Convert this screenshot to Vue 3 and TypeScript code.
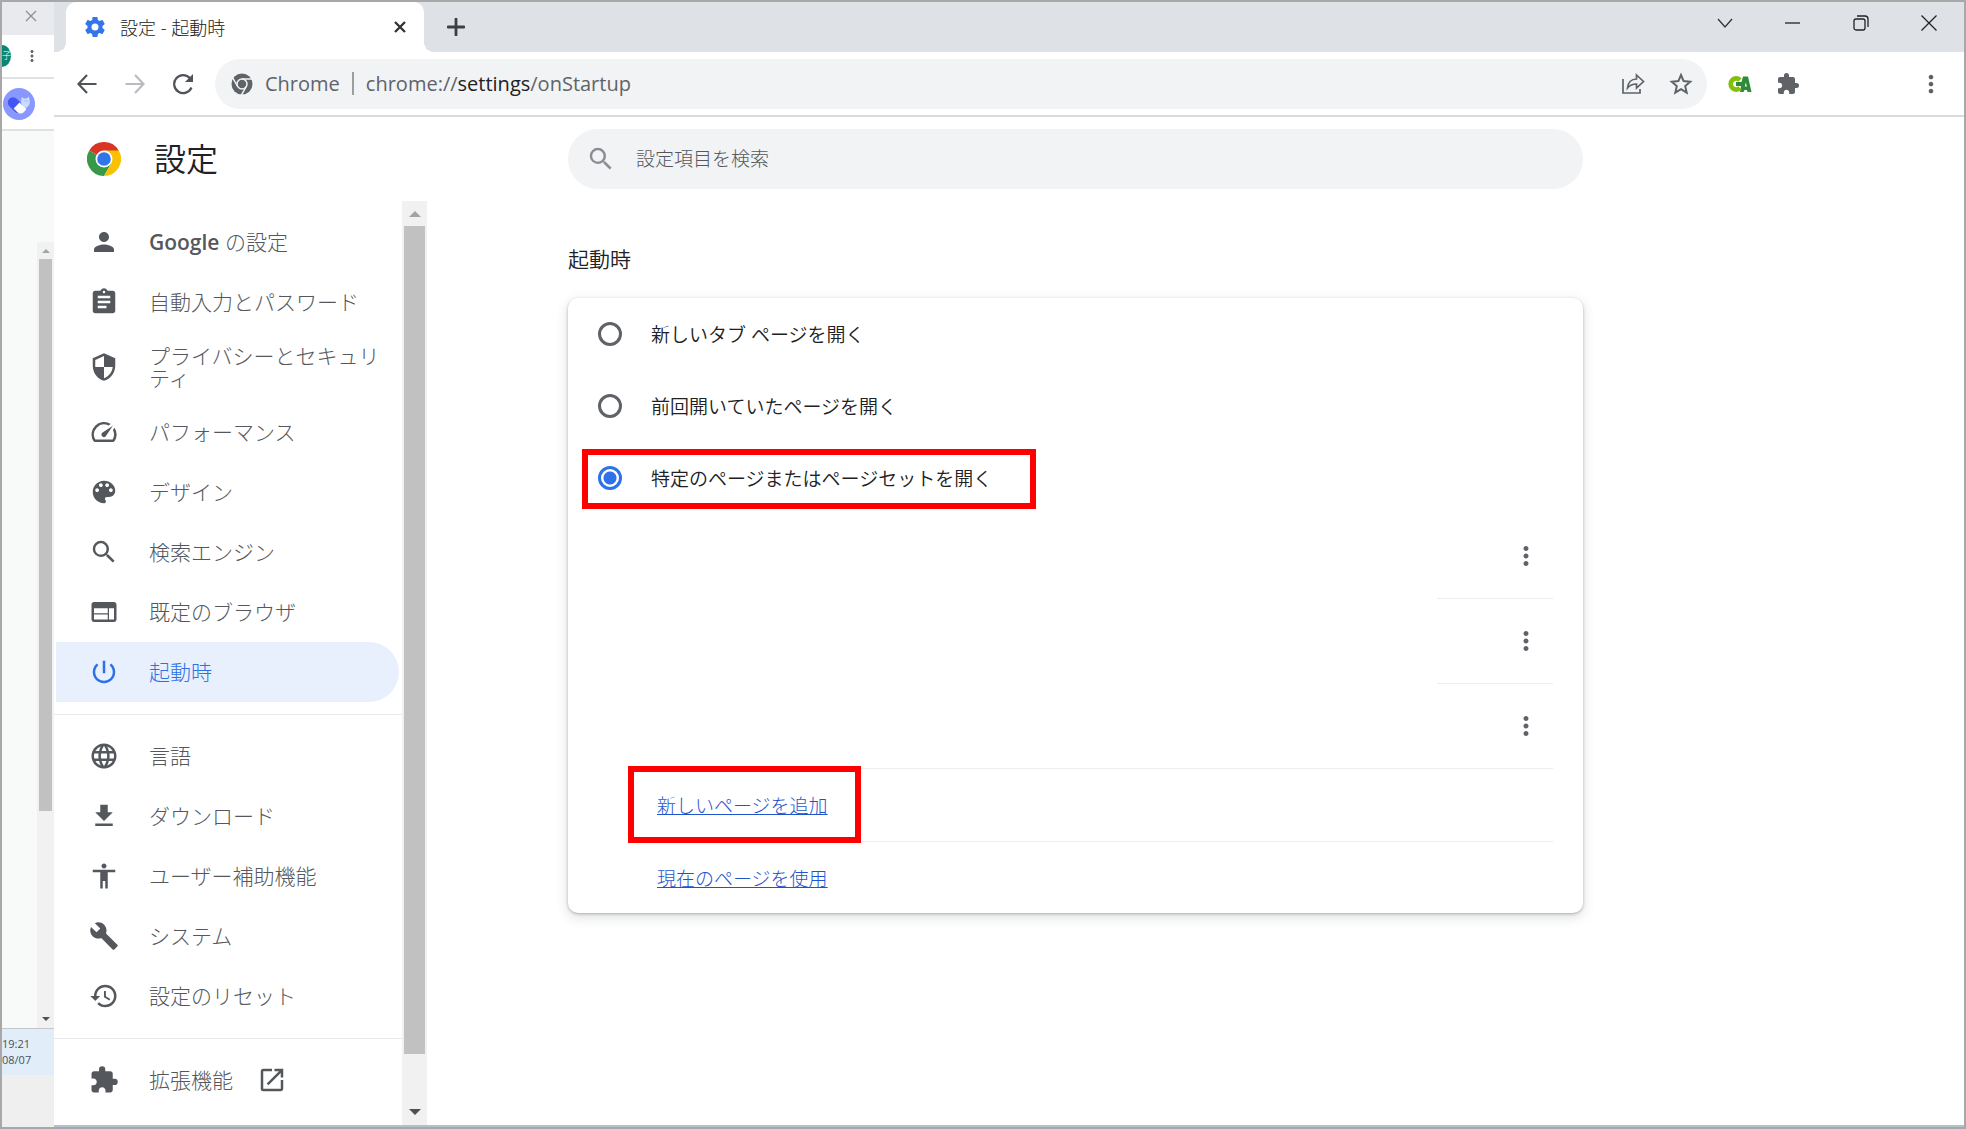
<script setup lang="ts">
import { ref } from 'vue'

interface NavItem {
  id: string
  label: string
  icon: string
  external?: boolean
}

const puzzle =
  'M20.5 11H19V7c0-1.100-.9-2-2-2h-4V3.500a2.500 2.500 0 0 0-5 0V5H4c-1.100 0-1.990.9-1.990 2v3.800H3.500c1.490 0 2.700 1.210 2.700 2.700s-1.210 2.700-2.700 2.700H2V20c0 1.100.9 2 2 2h3.800v-1.500c0-1.490 1.210-2.700 2.700-2.700s2.700 1.210 2.700 2.700V22H17c1.100 0 2-.9 2-2v-4h1.500a2.500 2.500 0 0 0 0-5z'
const search =
  'M15.500 14h-.79l-.28-.27A6.471 6.471 0 0 0 16 9.500 6.500 6.500 0 1 0 9.500 16c1.610 0 3.090-.59 4.230-1.570l.27.28v.79l5 4.990L20.490 19l-4.990-5zm-6 0C7.010 14 5 11.990 5 9.500S7.010 5 9.500 5 14 7.010 14 9.500 11.990 14 9.500 14z'
const dots =
  'M12 8c1.100 0 2-.9 2-2s-.9-2-2-2-2 .9-2 2 .9 2 2 2zm0 2c-1.100 0-2 .9-2 2s.9 2 2 2 2-.9 2-2-.9-2-2-2zm0 6c-1.100 0-2 .9-2 2s.9 2 2 2 2-.9 2-2-.9-2-2-2z'

const groups: NavItem[][] = [
  [
    { id: 'people', label: 'Google の設定', icon: 'M12 12c2.210 0 4-1.790 4-4s-1.790-4-4-4-4 1.790-4 4 1.790 4 4 4zm0 2c-2.670 0-8 1.340-8 4v2h16v-2c0-2.660-5.330-4-8-4z' },
    { id: 'autofill', label: '自動入力とパスワード', icon: 'M19 3h-4.180C14.400 1.840 13.300 1 12 1c-1.300 0-2.400.84-2.820 2H5c-1.100 0-2 .9-2 2v14c0 1.100.9 2 2 2h14c1.100 0 2-.9 2-2V5c0-1.100-.9-2-2-2zm-7 0c.55 0 1 .45 1 1s-.45 1-1 1-1-.45-1-1 .45-1 1-1zm2 14H7v-2h7v2zm3-4H7v-2h10v2zm0-4H7V7h10v2z' },
    { id: 'privacy', label: 'プライバシーとセキュリティ', icon: 'M12 1L3 5v6c0 5.550 3.840 10.740 9 12 5.160-1.260 9-6.450 9-12V5l-9-4zm0 10.990h7c-.53 4.120-3.280 7.790-7 8.940V12H5V6.300l7-3.110v8.800z' },
    { id: 'performance', label: 'パフォーマンス', icon: 'M20.380 8.570l-1.230 1.850a8 8 0 0 1-.22 7.580H5.070A8 8 0 0 1 15.580 6.850l1.850-1.230A10 10 0 0 0 3.350 19a2 2 0 0 0 1.720 1h13.850a2 2 0 0 0 1.740-1 10 10 0 0 0-.27-10.440zm-9.790 6.840a2 2 0 0 0 2.830 0l5.660-8.490-8.490 5.660a2 2 0 0 0 0 2.830z' },
    { id: 'appearance', label: 'デザイン', icon: 'M12 3c-4.970 0-9 4.030-9 9s4.030 9 9 9c.83 0 1.500-.67 1.500-1.500 0-.39-.15-.74-.39-1.010-.23-.26-.38-.61-.38-.99 0-.83.67-1.500 1.500-1.500H16c2.760 0 5-2.240 5-5 0-4.420-4.030-8-9-8zm-5.500 9c-.83 0-1.500-.67-1.500-1.500S5.670 9 6.500 9 8 9.670 8 10.500 7.330 12 6.500 12zm3-4C8.670 8 8 7.330 8 6.500S8.670 5 9.500 5s1.500.67 1.500 1.500S10.330 8 9.500 8zm5 0c-.83 0-1.500-.67-1.500-1.500S13.670 5 14.500 5s1.500.67 1.500 1.500S15.330 8 14.500 8zm3 4c-.83 0-1.500-.67-1.500-1.500S16.670 9 17.500 9s1.500.67 1.500 1.500-.67 1.500-1.500 1.500z' },
    { id: 'engines', label: '検索エンジン', icon: search },
    { id: 'browser', label: '既定のブラウザ', icon: 'M20 4H4c-1.100 0-1.990.9-1.990 2L2 18c0 1.100.9 2 2 2h16c1.100 0 2-.9 2-2V6c0-1.100-.9-2-2-2zm-5 14H4v-4h11v4zm0-5H4V9h11v4zm5 5h-4V9h4v9z' },
    { id: 'startup', label: '起動時', icon: 'M13 3h-2v10h2V3zm4.830 2.170l-1.420 1.420C17.990 7.860 19 9.810 19 12c0 3.870-3.130 7-7 7s-7-3.130-7-7c0-2.190 1.010-4.140 2.580-5.420L6.170 5.170C4.230 6.820 3 9.260 3 12c0 4.970 4.030 9 9 9s9-4.030 9-9c0-2.740-1.230-5.180-3.170-6.830z' },
  ],
  [
    { id: 'languages', label: '言語', icon: 'M11.990 2C6.470 2 2 6.480 2 12s4.470 10 9.990 10C17.520 22 22 17.520 22 12S17.520 2 11.990 2zm6.930 6h-2.950a15.650 15.650 0 0 0-1.380-3.560A8.030 8.030 0 0 1 18.920 8zM12 4.040c.83 1.200 1.480 2.530 1.910 3.960h-3.820c.43-1.430 1.080-2.760 1.910-3.960zM4.260 14C4.100 13.360 4 12.690 4 12s.1-1.360.26-2h3.380c-.08.66-.14 1.320-.14 2s.06 1.340.14 2H4.260zm.82 2h2.950c.32 1.250.78 2.450 1.380 3.560A7.987 7.987 0 0 1 5.080 16zm2.950-8H5.080a7.987 7.987 0 0 1 4.330-3.560A15.650 15.650 0 0 0 8.030 8zM12 19.960c-.83-1.200-1.480-2.530-1.910-3.960h3.820c-.43 1.430-1.080 2.760-1.910 3.960zM14.340 14H9.660c-.09-.66-.16-1.320-.16-2s.07-1.350.16-2h4.680c.09.65.16 1.320.16 2s-.07 1.340-.16 2zm.25 5.560c.6-1.110 1.060-2.310 1.380-3.560h2.950a8.030 8.030 0 0 1-4.330 3.560zM16.360 14c.08-.66.14-1.320.14-2s-.06-1.340-.14-2h3.380c.16.64.26 1.310.26 2s-.1 1.360-.26 2h-3.380z' },
    { id: 'downloads', label: 'ダウンロード', icon: 'M19 9h-4V3H9v6H5l7 7 7-7zM5 18v2h14v-2H5z' },
    { id: 'a11y', label: 'ユーザー補助機能', icon: 'M12 2c1.100 0 2 .9 2 2s-.9 2-2 2-2-.9-2-2 .9-2 2-2zm9 7h-6v13h-2v-6h-2v6H9V9H3V7h18v2z' },
    { id: 'system', label: 'システム', icon: 'M22.700 19l-9.100-9.100c.9-2.300.4-5-1.500-6.900-2-2-5-2.400-7.400-1.300L9 6 6 9 1.600 4.700C.4 7.100.9 10.100 2.900 12.100c1.900 1.900 4.600 2.400 6.900 1.500l9.100 9.100c.4.4 1 .4 1.400 0l2.300-2.300c.5-.4.5-1.100.1-1.400z' },
    { id: 'reset', label: '設定のリセット', icon: 'M13 3a9 9 0 0 0-9 9H1l3.890 3.890.07.14L9 12H6c0-3.870 3.130-7 7-7s7 3.130 7 7-3.130 7-7 7c-1.930 0-3.680-.79-4.940-2.060l-1.420 1.420A8.954 8.954 0 0 0 13 21a9 9 0 0 0 0-18zm-1 5v5l4.280 2.540.72-1.210-3.500-2.080V8H12z' },
  ],
  [{ id: 'addons', label: '拡張機能', icon: puzzle, external: true }],
]

const options = [
  { value: 'newtab', label: '新しいタブ ページを開く' },
  { value: 'continue', label: '前回開いていたページを開く' },
  { value: 'specific', label: '特定のページまたはページセットを開く' },
]

const active = ref('startup')
const startup = ref('specific')
const query = ref('')
</script>

<template>
  <div class="desktop">
    <aside class="behind">
      <div class="behind-title">
        <svg width="12" height="12" viewBox="0 0 12 12"><path d="M1 1l10 10M11 1L1 11" stroke="#8b8d90" stroke-width="1.200" /></svg>
      </div>
      <div class="behind-tools">
        <span class="avatar">子</span>
        <svg width="18" height="18" viewBox="0 0 24 24"><path :d="dots" fill="#5f6368" /></svg>
      </div>
      <div class="behind-app">
        <svg width="32" height="32" viewBox="0 0 32 32">
          <circle cx="16" cy="16" r="16" fill="#8898ff" />
          <g transform="rotate(45 10 14.500)"><rect x="4.800" y="9.300" width="18" height="10.400" rx="5.200" fill="#4355f5" /></g>
          <path d="M18 15l.5-6 2.500 1.500h2.500l2.500-2 .8 5c.4 2-.5 3.500-2 5l-4 4z" fill="#c9dcff" />
          <path d="M16.500 14.500l6.800 6.800-2.300 2.700a5 5 0 0 1-6.800 0l-3.500-3.500z" fill="#fff" />
          <path d="M22 12.500v1M24 12.500v1" stroke="#7f9be8" stroke-width="1" />
        </svg>
      </div>
      <div class="behind-page">
        <div class="track small">
          <span class="arrow up"></span>
          <span class="thumb"></span>
          <span class="arrow down"></span>
        </div>
      </div>
      <div class="clock"><span>19:21</span><span>08/07</span></div>
      <div class="behind-rest"></div>
    </aside>

    <div class="window">
      <header class="tabstrip">
        <div class="tab">
          <svg width="24" height="24" viewBox="0 0 24 24">
            <path fill="#3474ea" fill-rule="evenodd" d="M19.430 12.980c.04-.32.07-.64.07-.98s-.03-.66-.07-.98l2.110-1.650c.19-.15.24-.42.12-.64l-2-3.460c-.12-.22-.39-.3-.61-.22l-2.490 1a7.030 7.030 0 0 0-1.690-.98l-.38-2.650A.488.488 0 0 0 14 2h-4c-.25 0-.46.18-.49.42l-.38 2.650c-.61.25-1.170.59-1.690.98l-2.490-1c-.23-.09-.49 0-.61.22l-2 3.460c-.13.22-.07.49.12.64l2.110 1.650c-.04.32-.07.65-.07.98s.03.66.07.98l-2.110 1.650c-.19.15-.24.42-.12.64l2 3.460c.12.22.39.3.61.22l2.490-1c.52.4 1.080.73 1.690.98l.38 2.650c.03.24.24.42.49.42h4c.25 0 .46-.18.49-.42l.38-2.650c.61-.25 1.170-.59 1.690-.98l2.490 1c.23.09.49 0 .61-.22l2-3.460c.12-.22.07-.49-.12-.64l-2.110-1.650zM12 15.500a3.500 3.500 0 1 1 0-7 3.500 3.500 0 0 1 0 7z" />
          </svg>
          <span class="tab-title">設定 - 起動時</span>
          <button class="bare" aria-label="タブを閉じる">
            <svg width="14" height="14" viewBox="0 0 14 14"><path d="M2 2l10 10M12 2L2 12" stroke="#303236" stroke-width="2.300" /></svg>
          </button>
        </div>
        <button class="bare new-tab" aria-label="新しいタブ">
          <svg width="18" height="18" viewBox="0 0 18 18"><path d="M9 1v16M1 9h16" stroke="#3c4043" stroke-width="2.800" stroke-linecap="round" /></svg>
        </button>
        <div class="controls">
          <button class="bare" aria-label="タブを検索">
            <svg width="16" height="16" viewBox="0 0 16 16"><path d="M1 4l7 8 7-8" fill="none" stroke="#333" stroke-width="1.300" /></svg>
          </button>
          <button class="bare" aria-label="最小化">
            <svg width="16" height="16" viewBox="0 0 16 16"><path d="M0 8h15" stroke="#222" stroke-width="1.300" /></svg>
          </button>
          <button class="bare" aria-label="元に戻す">
            <svg width="16" height="16" viewBox="0 0 16 16" fill="none" stroke="#222" stroke-width="1.300"><rect x="1" y="4" width="11" height="11" rx="2" /><path d="M4 1h8a3 3 0 0 1 3 3v8" /></svg>
          </button>
          <button class="bare" aria-label="閉じる">
            <svg width="16" height="16" viewBox="0 0 16 16"><path d="M.5.5l15 15M15.500.5l-15 15" stroke="#222" stroke-width="1.300" /></svg>
          </button>
        </div>
      </header>

      <div class="toolbar">
        <button class="bare tool" aria-label="戻る">
          <svg width="20" height="20" viewBox="0 0 20 20"><path d="M19.500 10H2M10 1L1.500 10l8.500 9" fill="none" stroke="#50545a" stroke-width="2.200" /></svg>
        </button>
        <button class="bare tool" aria-label="進む">
          <svg width="20" height="20" viewBox="0 0 20 20"><path d="M.5 10H18M10 1l8.500 9-8.500 9" fill="none" stroke="#b9bbbe" stroke-width="2.200" /></svg>
        </button>
        <button class="bare tool" aria-label="再読み込み">
          <svg width="22" height="22" viewBox="0 0 22 22"><path d="M19.500 14.500A9 9 0 1 1 18 5.200" fill="none" stroke="#50545a" stroke-width="2.200" /><path d="M21 1v8h-8z" fill="#50545a" /></svg>
        </button>
        <div class="omnibox">
          <svg width="22" height="22" viewBox="0 0 22 22">
            <circle cx="11" cy="11" r="10.500" fill="#5f6368" />
            <g fill="none" stroke="#f1f3f4" stroke-width="1.500"><circle cx="11" cy="11" r="5" /><path d="M11 6h10M6.700 13.500l-5-8.700M15.300 13.500l-5 8.700" /></g>
          </svg>
          <span class="site-name">Chrome</span>
          <span class="sep"></span>
          <span class="url">chrome://<b>settings</b>/onStartup</span>
          <button class="bare" aria-label="共有">
            <svg width="24" height="24" viewBox="0 0 24 24" fill="none" stroke="#5f6368" stroke-width="1.700"><path d="M2 7v14h17v-4" /><path d="M15.500 3l7 6.500-7 6.500v-4c-4 0-6.500 1-9 4 .5-5 3.500-9 9-9z" /></svg>
          </button>
          <button class="bare" aria-label="ブックマーク">
            <svg width="24" height="24" viewBox="0 0 24 24"><path d="M12 3l2.600 6.100 6.600.6-5 4.400 1.500 6.500-5.700-3.400-5.700 3.400 1.500-6.500-5-4.400 6.600-.6z" fill="none" stroke="#5f6368" stroke-width="2" /></svg>
          </button>
        </div>
        <div class="extensions">
          <button class="bare" aria-label="CA 拡張機能">
            <svg width="24" height="18" viewBox="0 0 24 18"><path d="M8 7h5.500L15 1.500h5L23.500 17h-4l-.5-2h-2.500l-1 2H12l1-6H8z" fill="#2f8a3a" /><path d="M16.800 11.500l1-4 1 4z" fill="#fff" /><path d="M12 5A5.500 5.500 0 1 0 12 13" fill="none" stroke="#85bf0c" stroke-width="4.800" /></svg>
          </button>
          <button class="bare" aria-label="拡張機能">
            <svg width="24" height="24" viewBox="0 0 24 24"><path :d="puzzle" fill="#5f6368" /></svg>
          </button>
        </div>
        <button class="bare menu" aria-label="メニュー">
          <svg width="28" height="28" viewBox="0 0 24 24"><path :d="dots" fill="#5f6368" /></svg>
        </button>
      </div>

      <div class="page">
        <div class="side">
          <div class="brand">
            <svg width="34" height="34" viewBox="0 0 48 48">
              <path d="M24 24L3.200 12A24 24 0 0 1 44.800 12z" fill="#d93526" />
              <path d="M24 24L3.200 12A24 24 0 0 0 24 48l10.400-18z" fill="#37984a" />
              <path d="M24 12h20.800A24 24 0 0 1 24 48l10.400-18z" fill="#f9c100" />
              <circle cx="24" cy="24" r="12" fill="#fff" />
              <circle cx="24" cy="24" r="9.600" fill="#3275e8" />
            </svg>
            <h1>設定</h1>
          </div>
          <div class="nav-area">
            <nav>
              <ul v-for="(group, i) in groups" :key="i">
                <li v-for="item in group" :key="item.id">
                  <a :href="'#' + item.id" :class="['item', { tall: item.id === 'privacy', active: item.id === active }]" @click="active = item.id">
                    <svg width="30" height="30" viewBox="0 0 24 24"><path :d="item.icon" fill="currentColor" fill-rule="evenodd" /></svg>
                    <span v-if="item.id === 'people'"><em>Google</em> の設定</span>
                    <span v-else>{{ item.label }}</span>
                    <svg v-if="item.external" class="external" width="30" height="30" viewBox="0 0 24 24"><path d="M19 19H5V5h7V3H5a2 2 0 0 0-2 2v14a2 2 0 0 0 2 2h14c1.100 0 2-.9 2-2v-7h-2v7zM14 3v2h3.590l-9.830 9.830 1.410 1.410L19 6.410V10h2V3h-7z" fill="currentColor" /></svg>
                  </a>
                </li>
              </ul>
            </nav>
            <div class="track">
              <span class="arrow up"></span>
              <span class="thumb"></span>
              <span class="arrow down"></span>
            </div>
          </div>
        </div>

        <main>
          <label class="search">
            <svg width="30" height="30" viewBox="0 0 24 24"><path :d="search" fill="#8a8d91" /></svg>
            <input v-model="query" type="search" placeholder="設定項目を検索" aria-label="設定項目を検索" />
          </label>
          <h2>起動時</h2>
          <section class="card">
            <label v-for="o in options" :key="o.value" :class="['option', { marked: o.value === 'specific' }]">
              <input v-model="startup" type="radio" name="startup" :value="o.value" />
              <span>{{ o.label }}</span>
            </label>
            <div v-for="n in 3" :key="n" :class="['entry', { last: n === 3 }]">
              <button class="bare" aria-label="その他の操作">
                <svg width="30" height="30" viewBox="0 0 24 24"><path :d="dots" fill="#5f6368" /></svg>
              </button>
            </div>
            <div class="link-row marked"><a href="#add">新しいページを追加</a></div>
            <div class="link-row"><a href="#current">現在のページを使用</a></div>
          </section>
        </main>
      </div>
    </div>
  </div>
</template>

<style>
body {
  margin: 0;
}
</style>

<style scoped>
*,
*::before,
*::after {
  box-sizing: border-box;
}
svg {
  display: block;
  flex: none;
}
.desktop {
  display: flex;
  min-height: 100vh;
  border: 2px solid #a8a8a8;
  background: #fff;
  color: #202124;
  font-family: 'Open Sans', 'Noto Sans CJK JP', sans-serif;
  font-weight: 300;
}
.bare {
  display: flex;
  align-items: center;
  justify-content: center;
  padding: 0;
  border: 0;
  background: none;
}

/* window behind, on the left */
.behind {
  display: flex;
  flex-direction: column;
  flex: none;
  width: 52px;
  overflow: hidden;
}
.behind-title {
  display: flex;
  align-items: center;
  height: 33px;
  padding: 0 0 6px 23px;
  background: #e8eaed;
}
.behind-tools {
  display: flex;
  align-items: center;
  gap: 12px;
  height: 44px;
  border-bottom: 2px solid #dfe1e3;
}
.avatar {
  flex: none;
  width: 9px;
  height: 22px;
  border-radius: 0 9px 9px 0 / 0 11px 11px 0;
  background: #0b8675;
  color: #fff;
  font-size: 9px;
  line-height: 22px;
}
.behind-app {
  display: flex;
  align-items: center;
  height: 52px;
  padding-left: 1px;
  border-bottom: 2px solid #dfe1e3;
}
.behind-page {
  display: flex;
  flex: 1;
  justify-content: flex-end;
  padding-top: 111px;
  background: #f8faf9;
}
.clock {
  display: flex;
  flex-direction: column;
  height: 47px;
  padding-top: 7px;
  border-top: 1px solid #c4c8cc;
  background: #e1edf9;
  color: #4c5056;
  font-size: 11px;
  font-weight: 400;
  line-height: 16px;
}
.behind-rest {
  height: 52px;
  background: #efefef;
}

/* scrollbars */
.track {
  display: flex;
  flex-direction: column;
  flex: none;
  align-items: center;
  width: 25px;
  background: #f1f1f1;
}
.thumb {
  flex: 827 0 0;
  width: 21px;
  background: #c1c1c1;
}
.arrow {
  flex: none;
  display: flex;
  align-items: center;
  justify-content: center;
  height: 25px;
}
.arrow::before {
  content: '';
  border: 6px solid transparent;
  border-top-width: 0;
  border-bottom-color: #a3a3a3;
}
.arrow.down {
  flex: 61 0 0;
  align-items: flex-end;
  padding-bottom: 10px;
}
.arrow.down::before {
  border-top: 6px solid #505050;
  border-bottom: 0;
}
.small {
  width: 17px;
}
.small .thumb {
  flex: 551 0 0;
  width: 13px;
}
.small .arrow {
  height: 17px;
}
.small .arrow::before {
  border-left-width: 4px;
  border-right-width: 4px;
  border-bottom-width: 4px;
}
.small .arrow.down {
  flex: 210 0 0;
  padding-bottom: 7px;
}
.small .arrow.down::before {
  border-top-width: 4px;
  border-bottom: 0;
}

/* browser window */
.window {
  display: flex;
  flex: 1;
  flex-direction: column;
  min-width: 0;
  border-bottom: 2px solid #b4c0cf;
}
.tabstrip {
  display: flex;
  align-items: center;
  height: 50px;
  padding-left: 12px;
  background: #dee1e6;
}
.tab {
  position: relative;
  display: flex;
  align-items: center;
  width: 358px;
  height: 50px;
  padding: 0 17px;
  border-radius: 10px 10px 0 0;
  background: #fff;
}
.tab::before,
.tab::after {
  content: '';
  position: absolute;
  bottom: 0;
  width: 10px;
  height: 10px;
}
.tab::before {
  right: 100%;
  background: radial-gradient(circle at 0 0, transparent 10px, #fff 10px);
}
.tab::after {
  left: 100%;
  background: radial-gradient(circle at 100% 0, transparent 10px, #fff 10px);
}
.tab-title {
  flex: 1;
  margin-left: 13px;
  font-size: 18px;
}
.new-tab {
  margin-left: 23px;
}
.controls {
  display: flex;
  gap: 52px;
  margin: 0 27px 8px auto;
}
.toolbar {
  display: flex;
  align-items: center;
  height: 65px;
  border-bottom: 2px solid #d8dadd;
}
.tool {
  flex: none;
  width: 48px;
}
.tool:first-child {
  margin-left: 9px;
}
.omnibox {
  display: flex;
  flex: 1;
  align-items: center;
  height: 50px;
  margin-left: 8px;
  padding: 0 14px 0 16px;
  border-radius: 25px;
  background: #f1f3f4;
  color: #5f6368;
  font-size: 20px;
  font-weight: 400;
}
.site-name {
  margin-left: 12px;
}
.sep {
  width: 2px;
  height: 23px;
  margin: 0 12px;
  background: #9b9ea2;
}
.url {
  flex: 1;
}
.url b {
  color: #202124;
  font-weight: 400;
}
.omnibox .bare + .bare {
  margin-left: 24px;
}
.extensions {
  display: flex;
  gap: 24px;
  margin-left: 21px;
}
.menu {
  margin: 0 19px 0 117px;
}
.page {
  display: flex;
  flex: 1;
}
.side {
  display: flex;
  flex: none;
  flex-direction: column;
  width: 373px;
}
.brand {
  display: flex;
  align-items: center;
  height: 84px;
  padding-left: 33px;
}
h1 {
  margin: 0 0 0 33px;
  font-size: 32px;
  font-weight: 350;
  line-height: 40px;
}
.nav-area {
  display: flex;
  flex: 1;
}
nav {
  flex: 1;
  padding: 11px 0;
}
ul {
  margin: 0;
  padding: 0;
  list-style: none;
}
ul + ul {
  margin-top: 12px;
  padding-top: 11px;
  border-top: 1px solid #e8eaed;
}
.item {
  display: flex;
  align-items: center;
  gap: 30px;
  height: 60px;
  margin: 0 3px 0 2px;
  padding-left: 33px;
  border-radius: 0 30px 30px 0;
  color: #54585d;
  font-size: 21px;
  line-height: 22px;
  text-decoration: none;
}
.item em {
  font-style: normal;
  font-weight: 600;
}
.item.tall {
  height: 70px;
}
.item.active {
  background: #e8f0fe;
  color: #2f70e6;
}
.external {
  margin-left: -6px;
}

/* settings column */
main {
  flex: 1;
  max-width: 1015px;
  margin: 0 40px 0 141px;
}
.search {
  display: flex;
  align-items: center;
  gap: 20px;
  height: 60px;
  margin-top: 12px;
  padding: 0 18px;
  border-radius: 30px;
  background: #f1f3f4;
}
.search input {
  flex: 1;
  min-width: 0;
  padding: 0;
  border: 0;
  outline: 0;
  background: none;
  color: #202124;
  font: inherit;
  font-size: 19px;
}
.search input::placeholder {
  color: #54585d;
  opacity: 1;
}
h2 {
  margin: 54px 0 23px;
  font-size: 21px;
  font-weight: 350;
  line-height: 32px;
}
.card {
  border-radius: 10px;
  background: #fff;
  box-shadow:
    0 1px 3px rgba(60, 64, 67, 0.35),
    0 4px 12px 1px rgba(60, 64, 67, 0.14);
  font-size: 19px;
}
.option {
  position: relative;
  display: flex;
  align-items: center;
  height: 72px;
  padding-left: 30px;
  font-weight: 350;
}
.option input {
  appearance: none;
  width: 24px;
  height: 24px;
  margin: 0 29px 0 0;
  border: 3px solid #5f6368;
  border-radius: 50%;
}
.option input:checked {
  border-color: #2f72e8;
  background: radial-gradient(circle, #2f72e8 6px, transparent 7px);
}
.marked::after {
  content: '';
  position: absolute;
  z-index: 1;
  border: 6px solid #f00;
  pointer-events: none;
}
.option.marked::after {
  top: 7px;
  left: 14px;
  width: 454px;
  height: 60px;
}
.entry {
  display: flex;
  align-items: center;
  justify-content: flex-end;
  height: 85px;
  width: 116px;
  margin: 0 30px 0 auto;
  padding-right: 12px;
  border-bottom: 1px solid #eceeef;
}
.entry.last {
  width: auto;
  margin-left: 66px;
}
.link-row {
  position: relative;
  display: flex;
  align-items: center;
  height: 72px;
  margin: 0 30px 0 66px;
  padding-left: 23px;
}
.link-row + .link-row {
  border-top: 1px solid #eceeef;
}
.link-row.marked::after {
  top: -3px;
  left: -6px;
  width: 233px;
  height: 77px;
}
.link-row a {
  color: #1f55cc;
}
</style>
